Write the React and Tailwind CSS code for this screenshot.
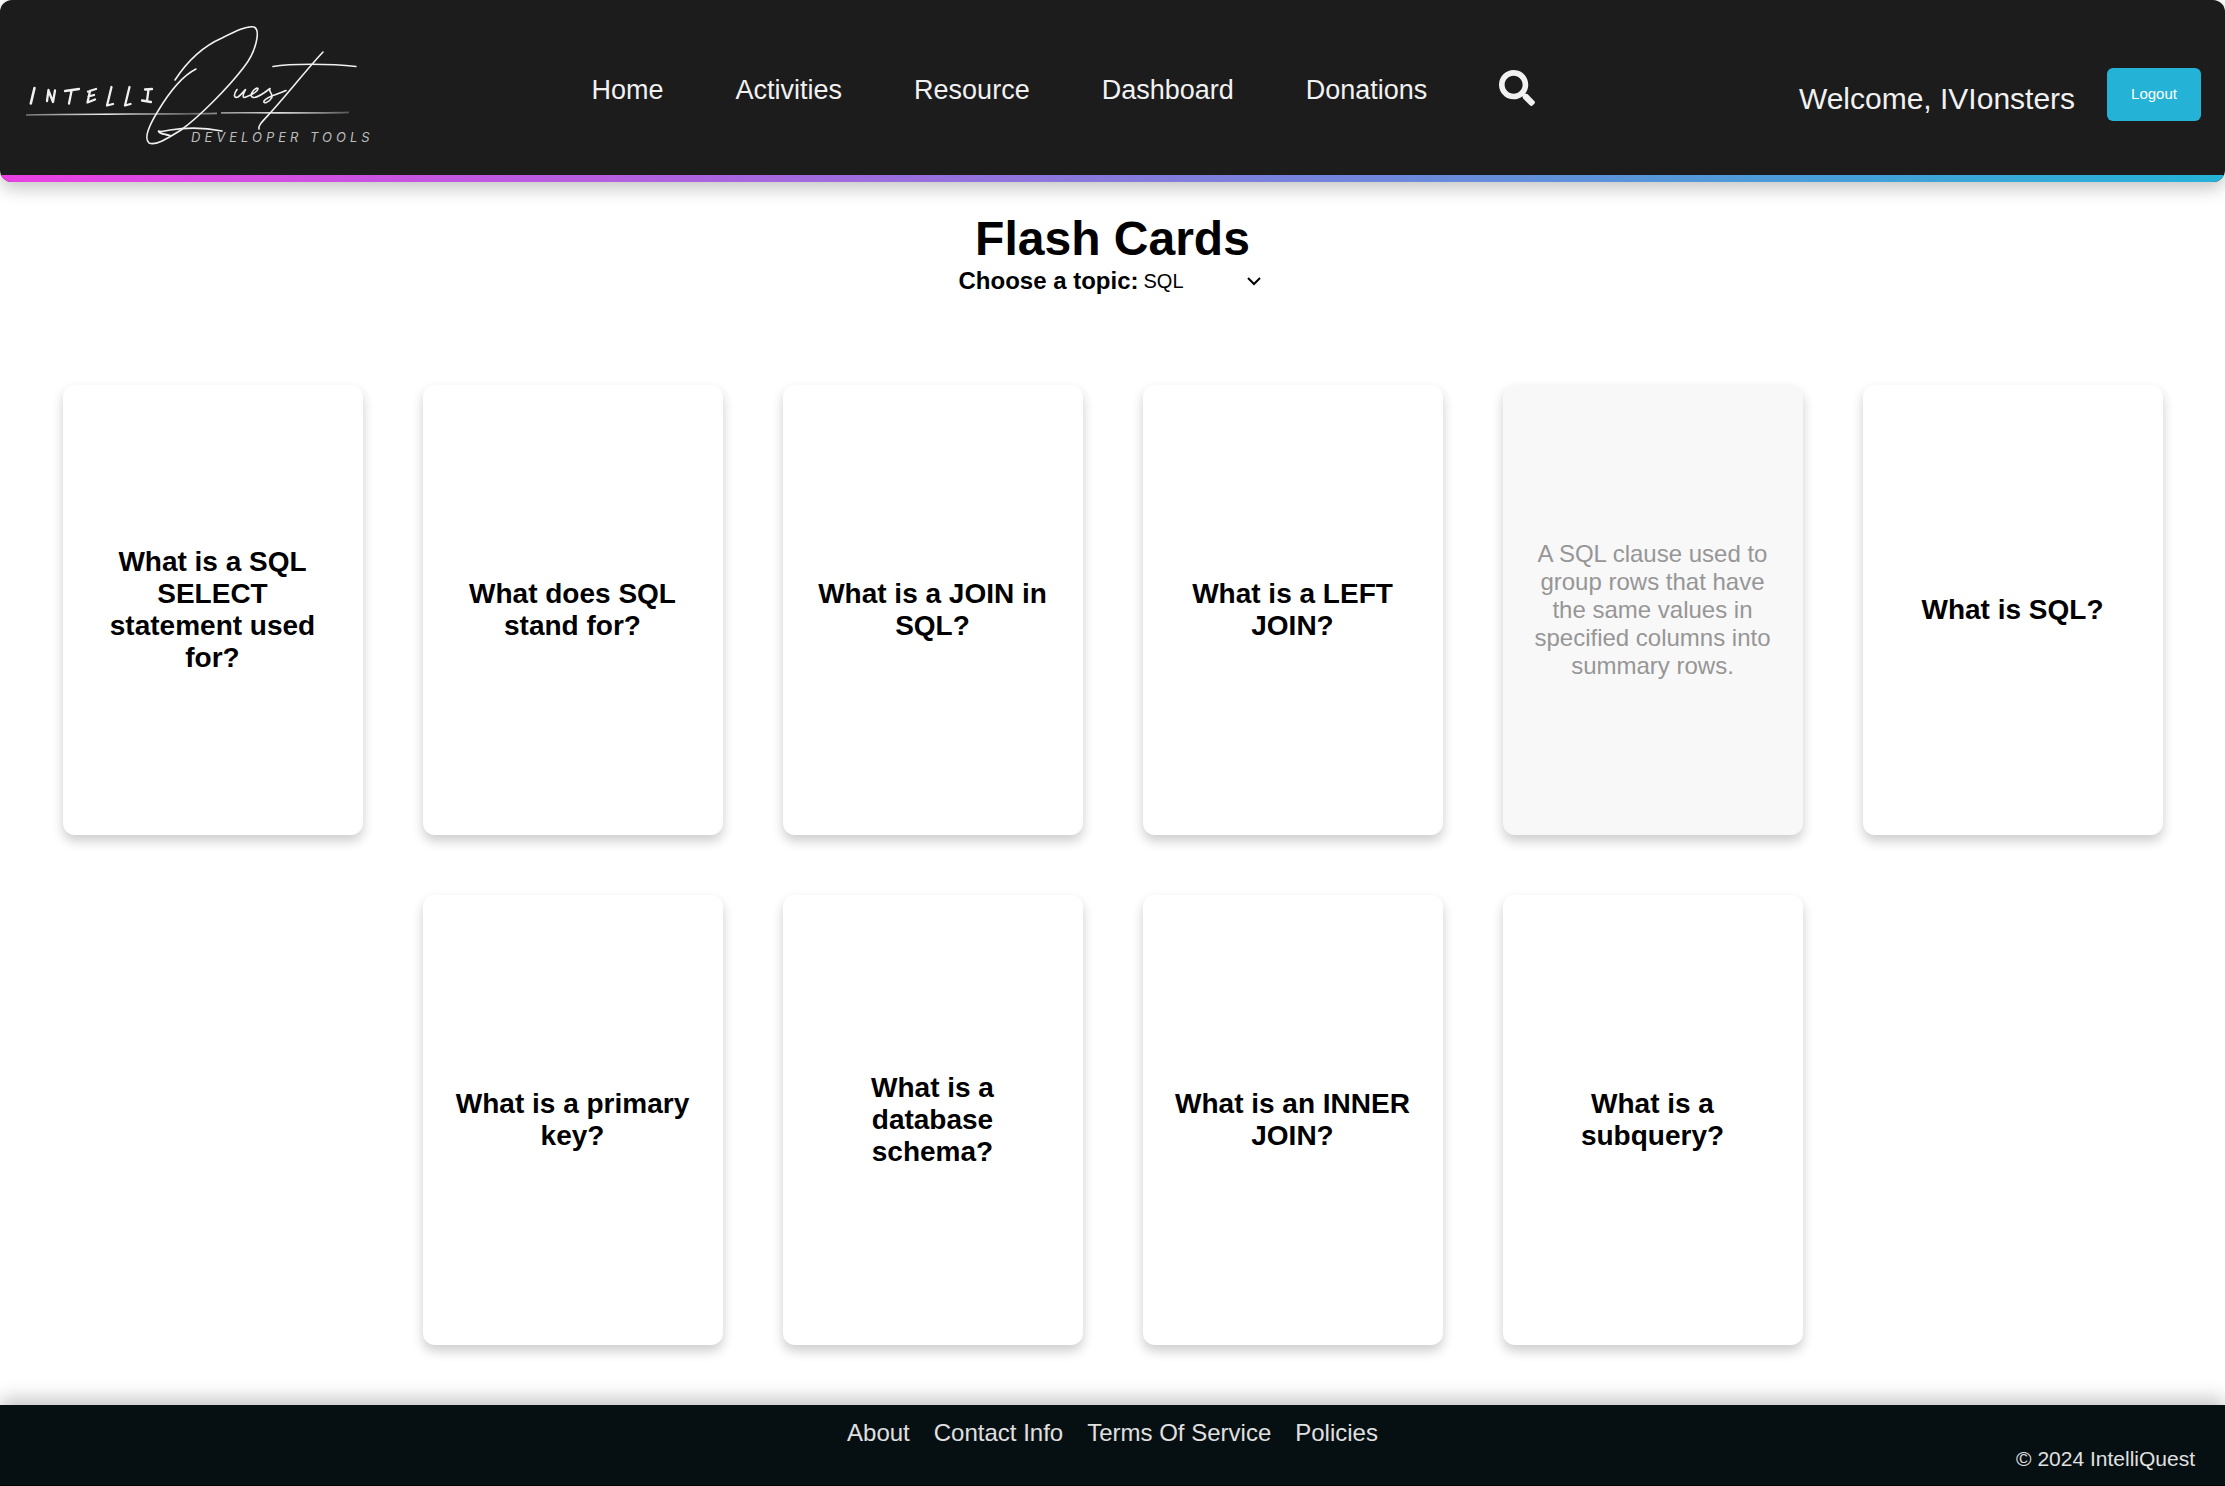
import { FaSearch } from "react-icons/fa";

const NAV = ["Home", "Activities", "Resource", "Dashboard", "Donations"];
const FOOTER = ["About", "Contact Info", "Terms Of Service", "Policies"];
const TOPICS = ["SQL", "HTML", "CSS", "JavaScript"];

const CARDS = [
  { text: "What is a SQL SELECT statement used for?" },
  { text: "What does SQL stand for?" },
  { text: "What is a JOIN in SQL?" },
  { text: "What is a LEFT JOIN?" },
  {
    text: "A SQL clause used to group rows that have the same values in specified columns into summary rows.",
    flipped: true,
  },
  { text: "What is SQL?" },
  { text: "What is a primary key?" },
  { text: "What is a database schema?" },
  { text: "What is an INNER JOIN?" },
  { text: "What is a subquery?" },
];

function Logo() {
  return (
    <svg viewBox="0 0 400 175" className="h-[175px] w-[400px]" fill="none" stroke="#f0f0f0" strokeLinecap="round" strokeLinejoin="round" role="img" aria-label="IntelliQuest Developer Tools">
      <defs>
        <linearGradient id="rule" gradientUnits="userSpaceOnUse" x1="26" y1="0" x2="350" y2="0">
          <stop offset="0" stopColor="#777" />
          <stop offset="0.25" stopColor="#eee" />
          <stop offset="0.5" stopColor="#666" />
          <stop offset="0.78" stopColor="#ddd" />
          <stop offset="1" stopColor="#555" />
        </linearGradient>
      </defs>
      {/* hand-lettered strokes */}
      <g strokeWidth="2.300">
        <path d="M34.500 88 L30.800 103.500" strokeWidth="2.600" />
        <path d="M48.500 90 L47 101 M48.500 90.500 L53 102 L55 90.500" />
        <path d="M65 91 L79 89 M71.500 91 L69 103.500" />
        <path d="M88 91.500 L96 89 M90 91 L87.500 102.500 L95 99.500 M88.500 96.500 L94 95" />
        <path d="M111.500 87 L107 105.500 L113 104" />
        <path d="M129.500 87 L125 105.500 L130.500 104" />
        <path d="M145 89.500 L152 89 M148.500 89.500 L147 101 M142 100.500 L151 102" />
      </g>
      <path d="M26 115 C110 113.500 150 114.500 217 113.300 M221 112.800 C270 112.500 310 113.500 349 112.300" stroke="url(#rule)" strokeWidth="1.700" strokeLinecap="butt" />
      <g strokeWidth="1.600">
        <path d="M175 80 C190 57 206 45 222 38 C236 31 247 25.500 254 27 C261 30 256 52 244 67 C228 88 199 117 181 130 C168 138 156 146 149 143 C143 138 150 124 158 111 C170 91 182 76 196 69" />
        <path d="M170 135.500 C163 134 158 133 158.500 131 C162 132.500 163 131 170 130 C186 127.500 207 128 222 131" />
        <path d="M237 89.500 C233 95 234 98.500 238 97 C241 95 243 92 245.500 89.500 C242 96 242.500 98.500 246 97 C251 95 258 92 258 88.500 C256 86.500 250 93 251.500 96.500 C254 99.500 263 94 270 88.500 C268 92 274 94 271.500 98 C269 103 263 104 264 101 C267 96 277 95 286 90.500" />
        <path d="M323 52 C308 68 289 92 272 111 C263 121 258 125 259 129" />
        <path d="M273 66.500 C290 63.500 330 63.500 356 66.500" />
      </g>
      <text x="191" y="142" fill="#bdbdbd" stroke="none" className="font-['Inter'] text-[13px] tracking-[4px] italic">
        DEVELOPER TOOLS
      </text>
    </svg>
  );
}

export default function App() {
  return (
    <div className="flex min-h-screen flex-col bg-white font-['Liberation_Sans',Arial,sans-serif] text-black">
      <header className="overflow-hidden rounded-xl bg-[#1c1c1c] text-[#f1f1f1] shadow-[0_6px_18px_rgba(0,0,0,0.24)]">
        <div className="flex h-[175px] items-center justify-between pr-6">
          <a href="#home" className="shrink-0">
            <Logo />
          </a>
          <nav className="flex items-center gap-[72px] pr-[72px] text-[27px]">
            {NAV.map((n) => (
              <a key={n} href="#nav" className="pt-1.5">{n}</a>
            ))}
            <button aria-label="Search">
              <FaSearch className="size-9" />
            </button>
          </nav>
          <div className="flex items-center gap-8 pt-3.5">
            <span className="pt-2 text-[30px]">Welcome, IVIonsters</span>
            <button className="h-[53px] rounded-md bg-[#24b3d6] px-6 text-[15px] text-white">Logout</button>
          </div>
        </div>
        <div className="h-[7px] bg-linear-to-r/srgb from-[#ea40e2] to-[#24b3d6]" />
      </header>

      <main className="flex-1 pt-[29px]">
        <div className="flex flex-col items-center">
          <h1 className="text-[48px] leading-[56px] font-bold">Flash Cards</h1>
          <div className="flex items-center gap-1">
            <label htmlFor="topic" className="text-[24px] leading-7 font-bold">Choose a topic:</label>
            <div className="relative flex items-center">
              <select id="topic" className="w-[124px] appearance-none bg-transparent pl-px text-[20px] leading-7">
                {TOPICS.map((t) => (
                  <option key={t}>{t}</option>
                ))}
              </select>
              <svg viewBox="0 0 14 9" className="pointer-events-none absolute right-1.5 h-[9px] w-[14px]" fill="none" stroke="black" strokeWidth="2">
                <path d="M1 1 L7 7 L13 1" />
              </svg>
            </div>
          </div>
        </div>
        <section className="mt-[60px] flex flex-wrap justify-center px-8 pb-[30px]">
          {CARDS.map((c) => (
            <button
              key={c.text}
              className={
                "m-[30px] flex h-[450px] w-[300px] items-center justify-center rounded-xl p-[30px] text-center shadow-[0_6px_12px_rgba(0,0,0,0.2)] " +
                (c.flipped ? "bg-[#f8f8f8] text-[24px] leading-7 text-[#969696]" : "bg-white text-[28px] leading-8 font-bold")
              }
            >
              {c.text}
            </button>
          ))}
        </section>
      </main>

      <footer className="border-b border-black bg-[#060f12] px-[30px] py-[14px] text-[#e0e0e0] shadow-[0_-6px_18px_rgba(0,0,0,0.24)]">
        <nav className="flex justify-center gap-6 text-[24px] leading-7">
          {FOOTER.map((f) => (
            <a key={f} href="#footer">{f}</a>
          ))}
        </nav>
        <p className="text-right text-[21px] leading-6">© 2024 IntelliQuest</p>
      </footer>
    </div>
  );
}
